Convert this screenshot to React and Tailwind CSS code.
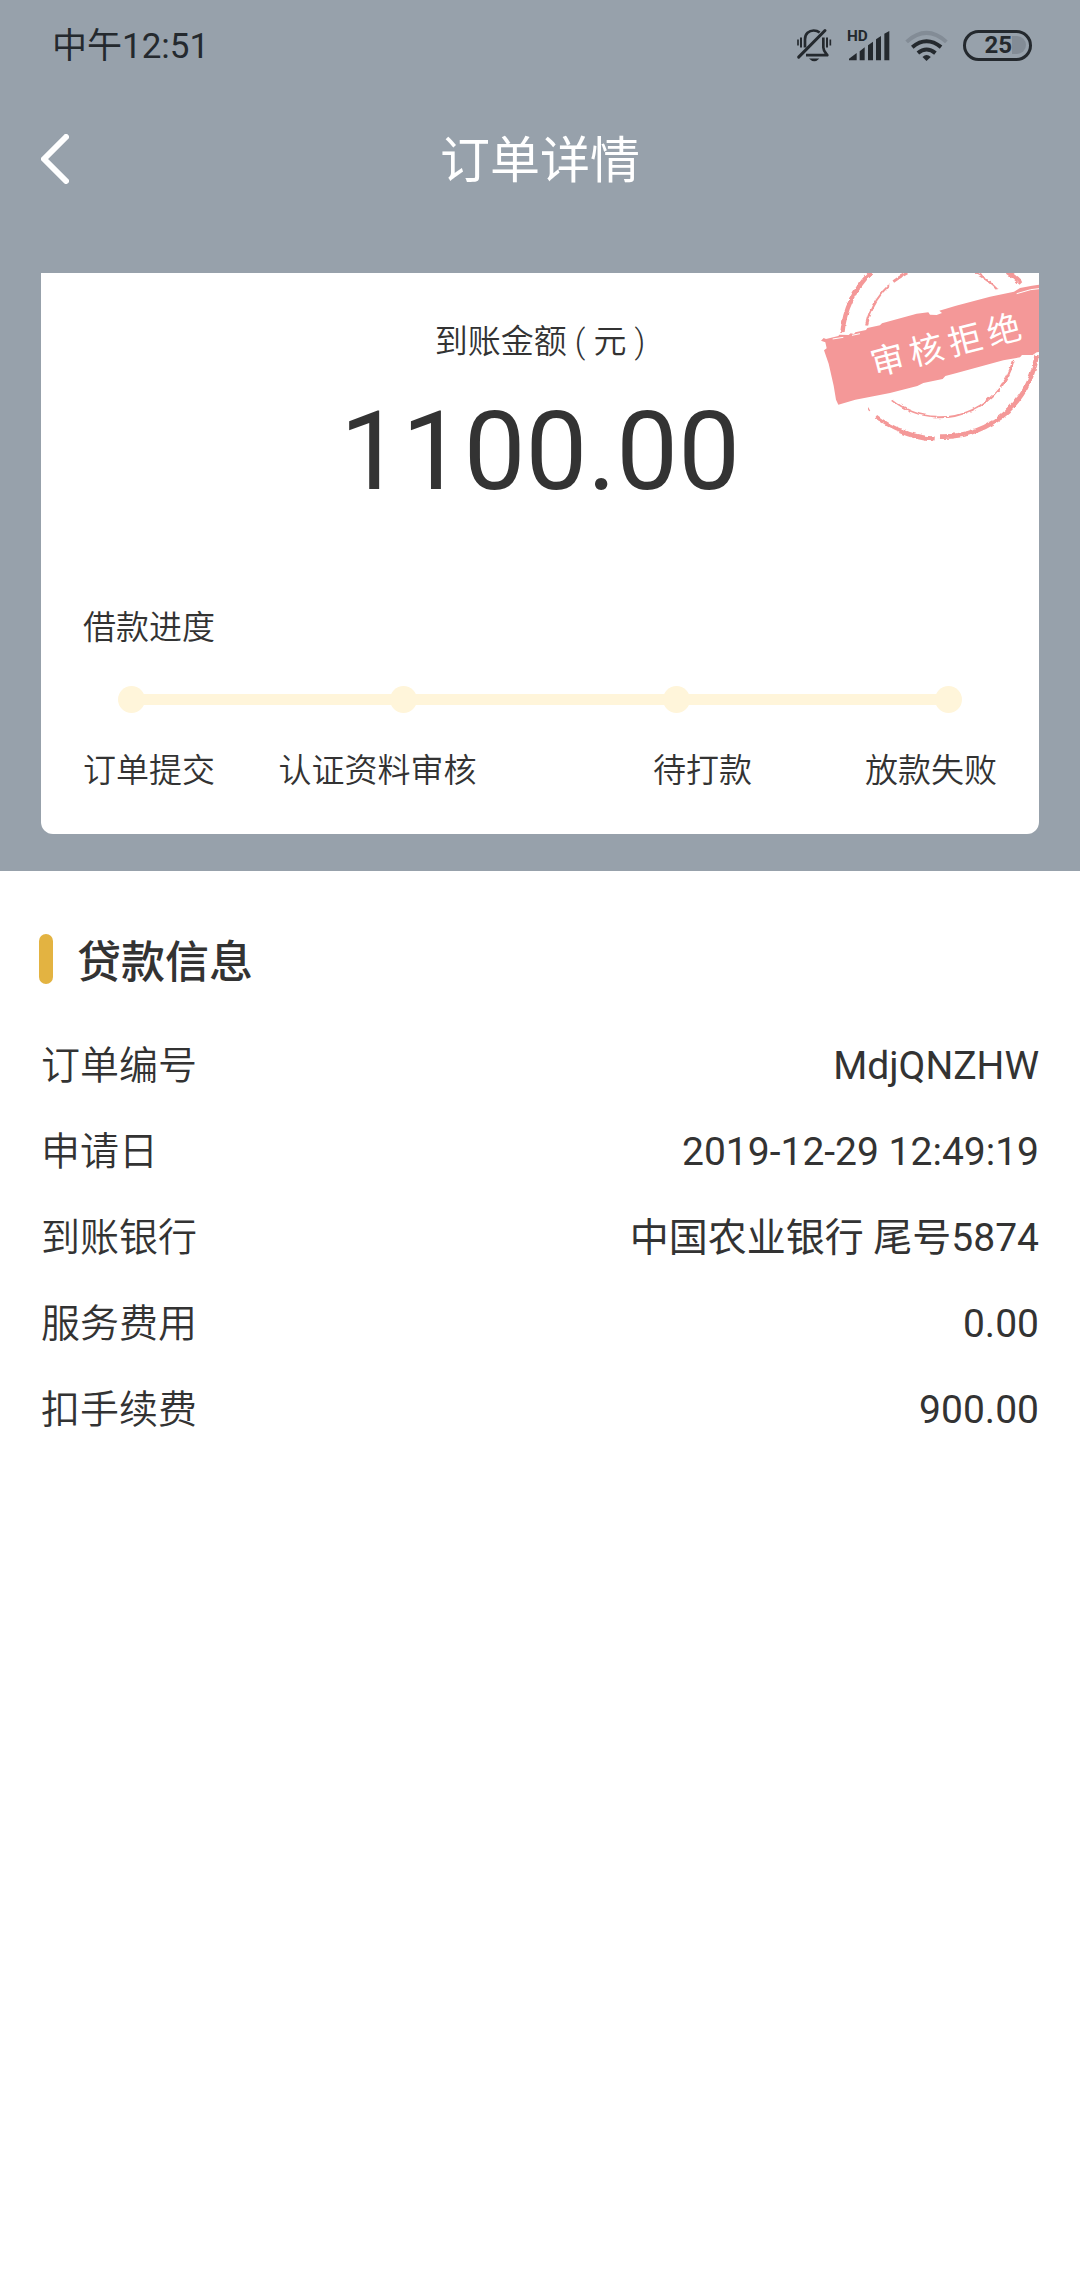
import { clsx } from 'clsx'

const STEPS = ['订单提交', '认证资料审核', '待打款', '放款失败']

const LOAN_INFO = [
  { label: '订单编号', value: 'MdjQNZHW' },
  { label: '申请日', value: '2019-12-29 12:49:19' },
  { label: '到账银行', value: '中国农业银行 尾号5874' },
  { label: '服务费用', value: '0.00' },
  { label: '扣手续费', value: '900.00' },
]

function MuteIcon() {
  return (
    <svg viewBox="54 50 108 104" className="h-[35px] w-9" fill="none" stroke="#24292e" strokeWidth="8">
      <path d="M81 108 V83 C81 67 93 57 107 57 C114 57 120 59 125 63" />
      <path d="M136 78 V108 C136 119 142 124 148 131 H84" strokeLinejoin="round" />
      <path d="M62 137 L141 57" strokeWidth="9" strokeLinecap="round" />
      <path d="M93 141 H124 Q109 158 93 141 Z" fill="#24292e" stroke="none" />
      <path d="M69 78 V108 M147 78 V108" strokeWidth="6" />
      <path d="M60 84 V102 M157 84 V102" strokeWidth="5" />
    </svg>
  )
}

function SignalIcon() {
  return (
    <svg viewBox="201 38 129 120" className="h-10 w-[43px] overflow-visible" fill="#24292e">
      <text x="201" y="86" fontSize="46" fontWeight="700" className="font-['Roboto',sans-serif]">HD</text>
      <path d="M207 144 V139 L230 122 V144 Z" />
      <path d="M239 144 V117 L254 105 V144 Z" />
      <path d="M264 144 V99 L279 88 V144 Z" />
      <path d="M288 144 V81 L303 71 V144 Z" />
      <path d="M313 144 V64 L328 56 V144 Z" />
    </svg>
  )
}

function WifiIcon() {
  return (
    <svg viewBox="373 52 130 98" className="h-[33px] w-[43px]" fill="none" stroke="#24292e" strokeWidth="12">
      <path d="M378 90 Q438 36 498 90" stroke="#838c96" />
      <path d="M395 106 Q438 70 482 106" />
      <path d="M412 124 Q438 102 465 124" />
      <path d="M426 136 Q438 124 451 136 L438 148 Z" fill="#24292e" stroke="none" />
    </svg>
  )
}

function StatusBar() {
  return (
    <div className="flex h-[90px] items-center justify-between pr-12 pl-[52px] text-[#24292e]">
      <span className="pt-[3px] text-[35px] leading-[48px]">中午12:51</span>
      <div className="flex items-center gap-[15px]">
        <MuteIcon />
        <SignalIcon />
        <WifiIcon />
        <div className="flex h-[31px] w-[69px] items-center justify-end rounded-full border-[3px] border-[#24292e] pr-[3px]">
          <span className="text-[24px] leading-6 font-bold">25</span>
          <span className="h-[18px] w-[14px] rounded-r-full bg-[#838c96]" />
        </div>
      </div>
    </div>
  )
}

function NavBar() {
  return (
    <div className="grid h-[138px] grid-cols-[1fr_auto_1fr] items-center px-[41px] text-white">
      <button type="button" aria-label="返回" className="justify-self-start">
        <svg viewBox="0 0 28 50" className="h-[50px] w-7" fill="none" stroke="currentColor" strokeWidth="6" strokeLinecap="round" strokeLinejoin="round">
          <path d="M25 3 L3 25 L25 47" />
        </svg>
      </button>
      <h1 className="pt-1 text-[50px] leading-[64px]">订单详情</h1>
    </div>
  )
}

// Rubber stamp, cut off by the top right corner of the card
function RejectedStamp() {
  return (
    <svg viewBox="87 54 660 540" className="absolute top-0 right-0 h-[180px] w-[220px]">
      <defs>
        <filter id="rough" x="-10%" y="-10%" width="120%" height="120%">
          <feTurbulence type="fractalNoise" baseFrequency="0.06" numOctaves="2" seed="4" result="noise" />
          <feDisplacementMap in="SourceGraphic" in2="noise" scale="11" xChannelSelector="R" yChannelSelector="G" />
        </filter>
      </defs>
      <g filter="url(#rough)" stroke="#f49898" fill="none">
        <path d="M157 234 A293 293 0 0 1 243 52" strokeWidth="13" />
        <path d="M652 50 A293 293 0 0 1 694 84" strokeWidth="15" />
        <path d="M740 300 A293 293 0 0 1 652 470" strokeWidth="14" />
        <path d="M655 468 A293 293 0 0 1 450 545" strokeWidth="14" />
        <path d="M434 552 A293 293 0 0 1 330 527" strokeWidth="15" />
        <path d="M338 528 A293 293 0 0 1 258 484" strokeWidth="11" />
        <path d="M236 458 L242 468" strokeWidth="4" />
        <path d="M230 208 A228 228 0 0 1 258 138" strokeWidth="9" />
        <path d="M258 138 A228 228 0 0 1 300 88" strokeWidth="6" />
        <path d="M310 80 A228 228 0 0 1 352 54" strokeWidth="8" />
        <path d="M556 54 A228 228 0 0 1 620 102" strokeWidth="6" />
        <path d="M670 318 A228 228 0 0 1 632 396" strokeWidth="8" />
        <path d="M628 400 A228 228 0 0 1 444 487" strokeWidth="6" />
        <path d="M440 485 A228 228 0 0 1 308 436" strokeWidth="5" />
      </g>
      <path
        fill="#f49898"
        d="M93 257 L101 249 L108 252 L145 243 L148 239 L176 240 L182 235 L192 237 L196 232 L228 225 L232 219 L270 211 L276 205 L380 176 L415 172 L420 179 L440 180 L456 174 L448 167 L498 152 L600 125 L672 110 L690 99 L726 92 L760 88 V289 L740 292 L728 300 L696 300 L690 307 L640 316 L500 354 L466 363 L458 372 L400 384 L382 393 L300 414 L196 434 L145 449 L138 434 L131 392 L116 326 L102 286 L110 280 L106 262 Z"
      />
      <path d="M680 116 L722 104 L747 101" stroke="#fff" strokeWidth="3" fill="none" />
      <path d="M128 252 L160 247 M186 241 L210 236" stroke="#fff" strokeWidth="3" />
      <text
        transform="rotate(-14.5 468 268)"
        x="236 356 476 596"
        y="306"
        fontSize="102"
        fill="#fff"
        className="font-['Noto_Sans_CJK_SC',sans-serif]"
      >
        审核拒绝
      </text>
    </svg>
  )
}

function Progress() {
  return (
    <div className="flex items-center px-[35px]">
      {STEPS.map((step, i) => (
        <div key={step} className={clsx('flex items-center', i > 0 && 'flex-1')}>
          {i > 0 && <span className="-mx-1 h-[11px] flex-1 bg-[#fff5da]" />}
          <span className="size-[27px] rounded-full bg-[#fff5da]" />
        </div>
      ))}
    </div>
  )
}

function AmountCard() {
  return (
    <section className="relative mx-[41px] overflow-hidden rounded-b-xl bg-white px-[42px] pt-[45px] pb-[39px]">
      <RejectedStamp />
      <p className="text-center text-[33px] leading-[48px] font-[350]">到账金额 ( 元 )</p>
      <p className="mt-[30px] text-center text-[110px] leading-[112px]">1100.00</p>
      <h2 className="mt-24 mb-[34px] text-[33px] leading-[48px] font-[350]">借款进度</h2>
      <Progress />
      <ol className="mt-[34px] flex text-[33px] leading-[48px] font-[350]">
        {STEPS.map((step, i) => (
          <li key={step} className={clsx('text-center', i > 0 && i < STEPS.length - 1 && 'flex-1')}>
            {step}
          </li>
        ))}
      </ol>
    </section>
  )
}

function LoanInfo() {
  return (
    <section className="px-[41px] pt-[60px]">
      <div className="-ml-0.5 flex items-center gap-6">
        <span className="h-[50px] w-[14px] rounded-full bg-[#e3b341]" />
        <h2 className="pt-2 text-[44px] leading-[48px] font-medium">贷款信息</h2>
      </div>
      <dl className="mt-9 text-[39px] leading-[86px]">
        {LOAN_INFO.map(({ label, value }) => (
          <div key={label} className="flex justify-between">
            <dt className="font-[350]">{label}</dt>
            <dd>{value}</dd>
          </div>
        ))}
      </dl>
    </section>
  )
}

export default function App() {
  return (
    <main className="min-h-screen bg-white font-['Roboto','Noto_Sans_CJK_SC',sans-serif] text-[#333]">
      <header className="bg-[#97a1ab] pb-[37px]">
        <StatusBar />
        <NavBar />
        <div className="pt-[45px]">
          <AmountCard />
        </div>
      </header>
      <LoanInfo />
    </main>
  )
}
